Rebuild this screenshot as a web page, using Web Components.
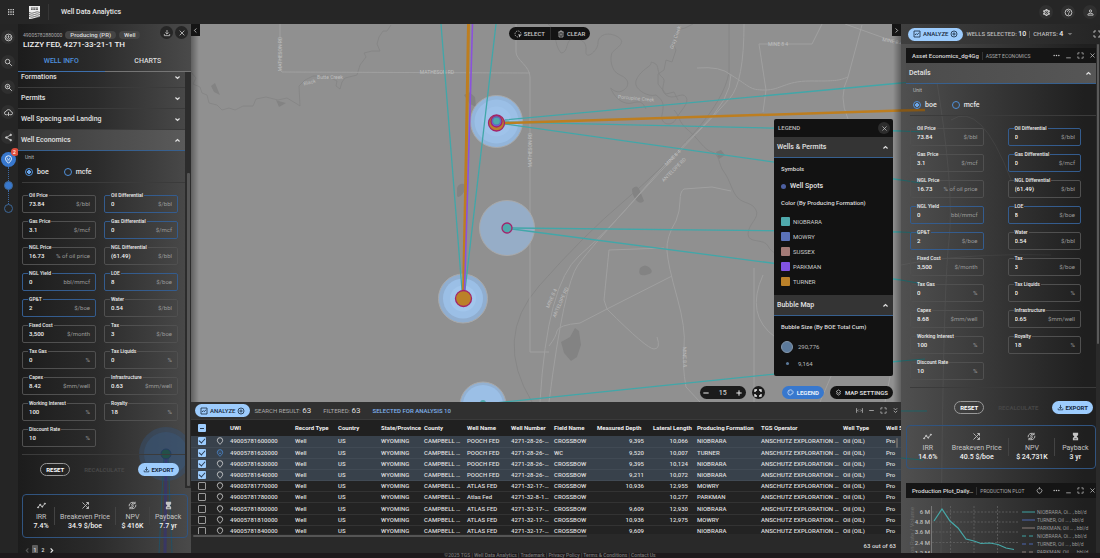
<!DOCTYPE html>
<html lang="en">
<head>
<meta charset="utf-8">
<title>Well Data Analytics</title>
<style>
  html, body {
    margin: 0;
    height: 100%;
    overflow: hidden;
    background: #262626;
    color: #e6e6e6;
    font: 500 6px/8px Roboto, "Liberation Sans", sans-serif;
  }
</style>
</head>
<body>
<app-shell>
  <app-header slot="header" title="Well Data Analytics"></app-header>
  <tool-rail slot="rail"></tool-rail>
  <well-panel slot="left"></well-panel>
  <map-view slot="map"></map-view>
  <results-grid slot="grid"></results-grid>
  <analysis-panel slot="right"></analysis-panel>
</app-shell>

<script>
const define = (tag, html, setup) => {
  customElements.define(tag, class extends HTMLElement {
    connectedCallback() {
      if (this.shadowRoot) return;
      const root = this.attachShadow({ mode: "open" });
      root.innerHTML = `<style>
        * { box-sizing: border-box; }
        button, input { font: inherit; color: inherit; margin: 0; }
        button { background: none; border: 0; padding: 0; cursor: pointer; }
      </style>` + (typeof html === "function" ? html(this) : html);
      if (setup) setup(this, root);
    }
  });
};

/* ---------- icons ---------- */
const ICONS = {
  apps: '<path fill="currentColor" stroke="none" d="M3 3h4v4H3zm7 0h4v4h-4zm7 0h4v4h-4zM3 10h4v4H3zm7 0h4v4h-4zm7 0h4v4h-4zM3 17h4v4H3zm7 0h4v4h-4zm7 0h4v4h-4z"/>',
  gear: '<path fill="currentColor" stroke="none" fill-rule="evenodd" d="M19.14 12.94c.04-.3.06-.61.06-.94 0-.32-.02-.64-.07-.94l2.03-1.58c.18-.14.23-.41.12-.61l-1.92-3.32c-.12-.22-.37-.29-.59-.22l-2.39.96c-.5-.38-1.03-.7-1.62-.94l-.36-2.54c-.04-.24-.24-.41-.48-.41h-3.84c-.24 0-.43.17-.47.41l-.36 2.54c-.59.24-1.13.57-1.62.94l-2.39-.96c-.22-.08-.47 0-.59.22L2.74 8.87c-.12.21-.08.47.12.61l2.03 1.58c-.05.3-.09.63-.09.94s.02.64.07.94l-2.03 1.58c-.18.14-.23.41-.12.61l1.92 3.32c.12.22.37.29.59.22l2.39-.96c.5.38 1.03.7 1.62.94l.36 2.54c.05.24.24.41.48.41h3.84c.24 0 .44-.17.47-.41l.36-2.54c.59-.24 1.13-.56 1.62-.94l2.39.96c.22.08.47 0 .59-.22l1.92-3.32c.12-.22.07-.47-.12-.61l-2.01-1.58zM12 17a5 5 0 1 1 0-10 5 5 0 0 1 0 10z"/><circle cx="12" cy="12" r="2.500" stroke-width="2"/>',
  help: '<circle cx="12" cy="12" r="9"/><path d="M9 10a3 3 0 1 1 4.500 2.500Q12 13.400 12 15M12 16.500v2"/>',
  person: '<circle cx="12" cy="8" r="3"/><path d="M5 19v-1.500q0-3.500 7-3.500t7 3.500V19z"/>',
  compass: '<circle cx="12" cy="12" r="9"/><path d="M12 6v7M8 8.500a5 5 0 1 0 8 0"/>',
  search: '<circle cx="9.500" cy="9.500" r="6"/><path d="M14 14l7 7"/>',
  searchplus: '<circle cx="9.500" cy="9.500" r="6"/><path d="M14 14l7 7M7 9.500h5M9.500 7v5"/>',
  cloud: '<path d="M8 18H6a4.500 4.500 0 0 1-.500-9A7 7 0 0 1 19 10a4 4 0 0 1-.500 8H16M12 11v9M9 17l3 3 3-3"/>',
  share: '<path d="M18 5L6 12l12 7"/><g fill="currentColor"><circle cx="18" cy="5" r="2"/><circle cx="6" cy="12" r="2"/><circle cx="18" cy="19" r="2"/></g>',
  pin: '<path d="M12 22C7 17 4 13.500 4 10a8 8 0 0 1 16 0c0 3.500-3 7-8 12z"/>',
  pinface: '<path d="M12 22C7 17 4 13.500 4 10a8 8 0 0 1 16 0c0 3.500-3 7-8 12z"/><path d="M8 9h2M14 9h2M9 13h6"/>',
  close: '<path d="M5 5l14 14M19 5L5 19"/>',
  down: '<path d="M5 8.500l7 7 7-7"/>',
  up: '<path d="M5 15.500l7-7 7 7"/>',
  left: '<path d="M15 5l-7 7 7 7"/>',
  right: '<path d="M9 5l7 7-7 7"/>',
  caret: '<path fill="#777" stroke="none" d="M5 9h14l-7 7z"/>',
  download: '<path d="M12 3v12M7 10.500l5 5 5-5M4 15v5h16v-5"/>',
  chart: '<path d="M3 3h18v18H3zM6 15l4-4 3 3 5-6"/>',
  addcircle: '<circle cx="12" cy="12" r="9"/><path d="M12 7v10M7 12h10"/>',
  lasso: '<circle cx="12" cy="12" r="9" stroke-dasharray="4 3"/><path fill="currentColor" stroke="none" d="M13 12l9 4-4 1.500L16 22z"/>',
  trash: '<path d="M4 6h16M9 6V3h6v3M6 6v15h12V6M10 10v7M14 10v7" stroke-width="2"/>',
  minus: '<path d="M4 12h16"/>',
  plus: '<path d="M4 12h16M12 4v16"/>',
  low: '<path d="M4 20h16"/>',
  dots: '<g fill="currentColor" stroke="none"><circle cx="4" cy="12" r="2.500"/><circle cx="12" cy="12" r="2.500"/><circle cx="20" cy="12" r="2.500"/></g>',
  full: '<path d="M3 9V3h6M15 3h6v6M21 15v6h-6M9 21H3v-6"/>',
  fitmap: '<g stroke-width="4"><path d="M3 9V3h6M15 3h6v6M21 15v6h-6M9 21H3v-6"/></g>',
  palette: '<path d="M12 3a9 9 0 1 0 0 18c2 0 1-3 2-4s7 1 7-5-5-9-9-9z"/><path d="M7 12h1M9 8h1M14 8h1M17 11h1"/>',
  layers: '<path d="M12 3l8 6-8 6-8-6zM4 15l8 6 8-6"/>',
  fit: '<path d="M2 4v16M22 4v16M9 9l-3 3 3 3M15 9l3 3-3 3"/>',
  dbl: '<path d="M6 4l6 6 6-6M6 13l6 6 6-6"/>',
  trend: '<path d="M2 18l6-8 6 5 8-9"/><g fill="currentColor"><circle cx="3" cy="17" r="1.500"/><circle cx="8.500" cy="10" r="1.500"/><circle cx="14" cy="15" r="1.500"/><circle cx="21" cy="7" r="1.500"/></g>',
  shuffle: '<path d="M4 4l6 6M4 20L20 4M14 4h6v6M14 14l6 6M20 14v6h-6"/>',
  money: '<path d="M3 14a9.500 9.500 0 0 1 16-8M21 10a9.500 9.500 0 0 1-16 8M19 2v5h-5M5 22v-5h5"/><path d="M15 9q-3-2.500-5 0t2 3 2 3-5 0M12 6v2M12 16v2"/>',
  hourglass: '<path fill="currentColor" stroke="none" d="M5 2h14v6l-4 4 4 4v6H5v-6l4-4-4-4z"/><path stroke="#333" stroke-width="2" d="M9 18h6"/>',
  refresh: '<path d="M8 6a8 8 0 1 0 8 0M12 2v6M9 5l3-3 3 3"/>'
};
define("ui-icon", el => `
  <style>
    :host { display: inline-flex; flex: none; width: var(--icon, 8px); height: var(--icon, 8px); }
    svg { width: 100%; height: 100%; fill: none; stroke: currentColor; stroke-width: var(--stroke, 2.4); }
  </style>
  <svg viewBox="0 0 24 24" aria-hidden="true">${ICONS[el.getAttribute("name")] || ""}</svg>`);

/* round icon-only button */
define("icon-button", el => `
  <style>
    :host { display: inline-flex; flex: none; }
    button { display: grid; place-items: center; width: var(--size, 14px); height: var(--size, 14px);
      border-radius: 50%; background: var(--bg, transparent); color: var(--fg, #ccc); }
  </style>
  <button type="button" aria-label="${el.getAttribute("label") || ""}"><ui-icon name="${el.getAttribute("icon")}"></ui-icon></button>`);

/* pill button: text in the slot, icons on either side */
define("pill-button", el => `
  <style>
    :host { display: inline-flex; flex: none; }
    button { display: flex; align-items: center; justify-content: center; gap: 3px; height: 13px; padding: 0 4px;
      border-radius: 7px; border: 1px solid transparent; background: #131313; color: #d5d5d5; font-weight: 700; --icon: 7px; white-space: nowrap; }
    :host([kind="light"]) button { background: #9dccfd; color: #16283c; gap: 1px; }
    :host([kind="blue"]) button { background: #3878ce; color: #e8f1fc; }
    :host([kind="line"]) button { background: none; border-color: #999; color: #fff; padding: 0 5px; }
    :host([kind="off"]) button { background: none; color: #464646; padding: 0; }
    :host([kind="light"][wide]) button { font-weight: 500; gap: 2px; --icon: 8px; }
  </style>
  <button type="button" ${el.hasAttribute("disabled") ? "disabled" : ""}>
    ${el.getAttribute("icon") ? `<ui-icon name="${el.getAttribute("icon")}"></ui-icon>` : ""}
    <slot></slot>
    ${el.getAttribute("end") ? `<ui-icon name="${el.getAttribute("end")}"></ui-icon>` : ""}
  </button>`);

/* ---------- frame ---------- */
define("app-shell", `
  <style>
    :host { display: grid; height: 100vh; grid-template: 24px minmax(0, 1fr) 5px / 18px 173px minmax(0, 1fr) 199px; }
    header { grid-column: 1 / -1; }
    .center { display: flex; flex-direction: column; min-width: 0; min-height: 0; }
    ::slotted([slot="map"]) { flex: 1; min-height: 0; }
    footer { grid-column: 1 / -1; overflow: hidden; background: #1d191b; color: #777; font-size: 5px; line-height: 5px; text-align: center; }
    footer a { color: inherit; text-decoration: none; }
  </style>
  <header><slot name="header"></slot></header>
  <slot name="rail"></slot>
  <slot name="left"></slot>
  <div class="center"><slot name="map"></slot><slot name="grid"></slot></div>
  <slot name="right"></slot>
  <footer>©2025 TGS | Well Data Analytics | <a href="#">Trademark</a> | <a href="#">Privacy Policy</a> | <a href="#">Terms &amp; Conditions</a> | <a href="#">Contact Us</a></footer>`);

define("app-header", el => `
  <style>
    :host { display: flex; align-items: center; height: 24px; padding: 0 3px 1px 4px; background: #262626; border-bottom: 1px solid #353535; }
    .logo { width: 11px; height: 13px; margin: 0 8px 0 11px; }
    h1 { margin: 0; padding-left: 12px; border-left: 1px solid #363636; font: 500 7px/16px Roboto, sans-serif; flex: 1; }
    nav { display: flex; gap: 8px; --bg: #303030; --icon: 9px; }
  </style>
  <icon-button icon="apps" label="Applications"></icon-button>
  <svg class="logo" viewBox="0 0 22 26"><path fill="#eee" d="M0 0h22v22q-6 0-11 2T0 26z"/><path stroke="#262626" stroke-width="1.200" fill="none" d="M0 13q6 3 11 0t11 0M0 17q6 3 11 0t11 0M0 21q6 3 11 0t11 0"/><path fill="#555" d="M4 3h14v5H4z"/><path stroke="#eee" stroke-width="1" d="M8 3v5M13 3v5M4 5.500h14"/></svg>
  <h1>${el.getAttribute("title")}</h1>
  <nav>
    <icon-button icon="gear" label="Settings"></icon-button>
    <icon-button icon="help" label="Help"></icon-button>
    <icon-button icon="person" label="Account"></icon-button>
  </nav>`);

define("tool-rail", `
  <style>
    :host { display: flex; flex-direction: column; align-items: center; gap: 11px; padding: 6px 2px 0 0; background: #252525; --bg: #2f2f2f; --icon: 9px; }
    .pins { display: flex; flex-direction: column; align-items: center; margin-top: -3px; position: relative; --bg: #3878ce; --fg: #fff; --size: 15px; --icon: 9px; }
    .badge { position: absolute; top: -4px; right: -3px; width: 8px; height: 8px; border-radius: 4px; background: #e04f3d; color: #fff; font-size: 5px; line-height: 8px; text-align: center; }
    i { height: 14px; border-left: 1px dotted #3c6aa5; }
    b { width: 9px; height: 9px; border-radius: 5px; border: 1px solid #3d6899; }
    b.on { background: #3878ce; }
  </style>
  <icon-button icon="compass" label="Explore"></icon-button>
  <icon-button icon="search" label="Search"></icon-button>
  <icon-button icon="searchplus" label="Advanced search"></icon-button>
  <icon-button icon="cloud" label="Downloads"></icon-button>
  <icon-button icon="share" label="Share"></icon-button>
  <div class="pins">
    <icon-button icon="pinface" label="Selected wells"></icon-button>
    <span class="badge">2</span>
    <i></i><b class="on"></b><i></i><b></b>
  </div>`);

/* ---------- shared economics form ---------- */
define("unit-field", el => `
  <style>
    :host { display: block; min-width: 0; }
    fieldset { display: flex; align-items: center; height: 21px; margin: 0; padding: 0 5px 2px 6px; min-width: 0; border: 1px solid #505050; border-radius: 2px; }
    :host([edited]) fieldset { border-color: #345c8e; }
    legend { padding: 0 1px; margin-left: -1px; font-size: 5px; line-height: 6px; height: 6px; color: #eee; white-space: nowrap; }
    input { flex: 1; width: 0; min-width: 0; height: 8px; padding: 0; border: 0; background: none; outline: 0; font-size: 6px; line-height: 8px; color: #f2f2f2; }
    span { color: #9a9a9a; font-size: 6px; font-weight: 400; white-space: nowrap; }
  </style>
  <fieldset>
    <legend><label for="v">${el.getAttribute("label")}</label></legend>
    <input id="v" value="${el.getAttribute("value")}"><span>${el.getAttribute("unit")}</span>
  </fieldset>`);

define("economics-form", el => {
  const fields = [
    ["Oil Price", "73.84", "$/bbl"], ["Oil Differential", "0", "$/bbl", 1],
    ["Gas Price", "3.1", "$/mcf"], ["Gas Differential", "0", "$/mcf", 1],
    ["NGL Price", "16.73", "% of oil price"], ["NGL Differential", "(61.49)", "$/bbl"],
    ["NGL Yield", "0", "bbl/mmcf", 1], ["LOE", "8", "$/boe", 1],
    ["GP&amp;T", "2", "$/boe", 1], ["Water", "0.54", "$/bbl"],
    ["Fixed Cost", "3,500", "$/month"], ["Tax", "3", "$/boe"],
    ["Tax Gas", "0", "%"], ["Tax Liquids", "0", "%"],
    ["Capex", el.getAttribute("capex"), "$mm/well"], ["Infrastructure", el.getAttribute("infrastructure"), "$mm/well"],
    ["Working Interest", "100", "%"], ["Royalty", "18", "%"],
    ["Discount Rate", "10", "%"]
  ];
  return `
  <style>
    :host { display: block; padding: 2px 0 0 4px; }
    .unit { padding-left: 3px; font-size: 5px; font-weight: 400; color: #bbb; }
    .radios { display: flex; gap: 15px; height: 14px; margin: 4px 0 3px 3px; font-size: 7px; }
    .radios label { display: flex; align-items: center; gap: 4px; }
    .radios input { appearance: none; width: 8px; height: 8px; border: 1px solid #4f8fd8; border-radius: 50%; }
    .radios input:checked { background: radial-gradient(#6aa6ea 0 2px, transparent 2px 4px); }
    .fields { display: grid; grid-template-columns: 1fr 1fr; gap: 5px var(--col-gap, 8px); padding: 9px var(--inset, 7px) 7px 0; border: solid #3b3b3b; border-width: 1px 0; }
    .actions { display: flex; justify-content: flex-end; align-items: center; gap: 13px; padding: var(--act-pad, 8px) var(--act-inset, 6px) 0 0; }
  </style>
  <div class="unit">Unit</div>
  <div class="radios">
    <label><input type="radio" name="unit" checked>boe</label>
    <label><input type="radio" name="unit">mcfe</label>
  </div>
  <div class="fields">${fields.map(([label, value, unit, edited]) =>
    `<unit-field label="${label}" value="${value}" unit="${unit}" ${edited ? "edited" : ""}></unit-field>`).join("")}</div>
  <div class="actions">
    <pill-button kind="line">RESET</pill-button>
    <pill-button kind="off" disabled>RECALCULATE</pill-button>
    <pill-button kind="light" icon="download">EXPORT</pill-button>
  </div>`;
});

define("metric-card", el => {
  const items = [["trend", "IRR", "irr"], ["shuffle", "Breakeven Price", "breakeven"], ["money", "NPV", "npv"], ["hourglass", "Payback", "payback"]];
  return `
  <style>
    :host { display: flex; justify-content: space-around; align-items: center; height: 44px; padding: 0 3px 0 8px; border: 1px solid #31547f; border-radius: 4px; box-sizing: border-box; }
    div { display: flex; flex-direction: column; align-items: center; font-size: 7px; line-height: 9px; color: #c4c4c4; font-weight: 400; --icon: 9px; white-space: nowrap; }
    b { font-weight: 500; color: #f2f2f2; }
    i { height: 18px; border-left: 1px solid #434343; }
    ui-icon { margin-bottom: 3px; }
  </style>
  ${items.map(([icon, label, key]) => `<div><ui-icon name="${icon}"></ui-icon><span>${label}</span><b>${el.getAttribute(key)}</b></div>`).join("<i></i>")}`;
});

/* collapsible section heading */
define("section-bar", el => `
  <style>
    :host { display: block; border-bottom: 1px solid #3b3b3b; }
    :host([open]) { background: var(--open-bg, linear-gradient(90deg, #3a3a3a, #5a5a5a)); border-color: #37608f; }
    button { display: flex; align-items: center; justify-content: space-between; width: 100%; height: 20px; padding: 0 4px 0 3px; font-size: 7px; line-height: 9px; text-align: left; color: #e2e2e2; --icon: 7px; --stroke: 4; }
  </style>
  <button type="button" aria-expanded="${el.hasAttribute("open")}"><slot></slot><ui-icon name="${el.hasAttribute("open") ? "up" : "down"}"></ui-icon></button>`);

/* ---------- left panel ---------- */
define("well-panel", `
  <style>
    :host { display: flex; flex-direction: column; position: relative; overflow: hidden; background: linear-gradient(90deg, #1c1c1c, #2b2b2b 45%, #4a4a4a); }
    .ghost { position: absolute; right: 0; bottom: 0; width: 60px; height: 130px; }
    .top { position: relative; padding: 7px 4px 0 5px; }
    .meta { display: flex; align-items: center; gap: 3px; font-size: 5px; color: #aaa; font-weight: 400; }
    .meta b { padding: 0 5px; border-radius: 4px; background: #454545; color: #ddd; font-size: 6px; font-weight: 500; line-height: 8px; }
    h2 { margin: 1px 0 0; font: 500 8px/10px Roboto, sans-serif; color: #f0f0f0; }
    .tools { position: absolute; top: 2px; right: 3px; display: flex; gap: 2px; --size: 13px; --bg: #262626; --icon: 8px; }
    .tabs { display: flex; position: relative; }
    .tabs button { flex: 1; height: 22px; font-size: 7px; border-bottom: 1px solid #757575; color: #ddd; }
    .tabs button.on { color: #4f90de; border-color: #3d6fac; }
    .scroll { position: relative; display: flex; flex: 1; min-height: 0; }
    .list { flex: 1; min-width: 0; }
    .first { margin-top: -5px; }
    .clip { overflow: hidden; }
    .bar { width: 6px; padding: 101px 1px 0 2px; background: #2c2c2c; height: 416px; }
    .bar i { display: block; height: 313px; background: #555; border-radius: 1px; }
    metric-card { margin: 18px -3px 0 4px; }
    .pages { display: flex; align-items: center; gap: 2px; padding: 7px 6px 0; font-size: 5px; --icon: 7px; --stroke: 4; }
    .pages button { width: 6px; height: 10px; border-radius: 1px; display: grid; place-items: center; }
    .pages .on { background: #5e5e5e; }
    .pages .off { color: #555; }
  </style>
  <svg class="ghost" viewBox="131 423 60 130">
    <circle cx="166" cy="454" r="27" fill="#35506f" opacity=".5"/>
    <circle cx="166" cy="454" r="22" fill="#3a5a80" opacity=".4"/>
    <path d="M164 455l-5 98M168 455l4 98" stroke="#234f63" fill="none"/>
    <path d="M166 455l-1 98" stroke="#34307a" stroke-width="3" opacity=".6"/>
    <circle cx="166" cy="454" r="5" fill="#23504a" stroke="#273b63"/>
  </svg>
  <div class="top">
    <div class="meta">49005782880000 <b>Producing (PR)</b> <b>Well</b></div>
    <h2>LIZZY FED, 4271-33-21-1 TH</h2>
    <div class="tools"><icon-button icon="download" label="Download"></icon-button><icon-button icon="close" label="Close"></icon-button></div>
  </div>
  <div class="tabs"><button type="button" class="on">WELL INFO</button><button type="button">CHARTS</button></div>
  <div class="scroll">
    <div class="list">
      <div class="clip"><section-bar class="first">Formations</section-bar></div>
      <section-bar>Permits</section-bar>
      <section-bar>Well Spacing and Landing</section-bar>
      <section-bar open>Well Economics</section-bar>
      <economics-form capex="8.42" infrastructure="0.63"></economics-form>
      <metric-card irr="7.4%" breakeven="34.9 $/boe" npv="$ 416K" payback="7.7 yr"></metric-card>
      <div class="pages"><button type="button" class="off" aria-label="Previous"><ui-icon name="left"></ui-icon></button><button type="button" class="on">1</button><button type="button">2</button><button type="button" aria-label="Next"><ui-icon name="right"></ui-icon></button></div>
    </div>
    <div class="bar"><i></i></div>
  </div>`);

/* ---------- map ---------- */
define("map-legend", `
  <style>
    :host { display: block; width: 119px; background: #121212; border-radius: 2px; overflow: hidden; --open-bg: #343434; }
    .head { display: flex; align-items: center; justify-content: space-between; height: 18px; padding: 0 3px 0 4px; font-size: 6px; color: #bbb; --size: 12px; --bg: #2d2d2d; --icon: 7px; }
    section { padding: 5px 7px 9px; }
    h4 { margin: 0 0 5px; font: 500 6px/12px Roboto, sans-serif; color: #ddd; }
    .spot { display: flex; align-items: center; gap: 4px; height: 12px; margin-bottom: 5px; font-size: 7px; }
    .spot i { width: 5px; height: 5px; border-radius: 50%; background: #4c5fa0; }
    ul { display: grid; gap: 6px; margin: 8px 0 0; padding: 0; list-style: none; font-size: 6px; line-height: 9px; font-weight: 400; color: #ccc; }
    li { display: flex; align-items: center; gap: 3px; }
    li i { width: 9px; height: 9px; border-radius: 1px; background: var(--c); }
    .size { display: flex; align-items: center; gap: 5px; height: 17px; font-weight: 400; color: #bbb; }
    .size span { display: grid; place-items: center; width: 12px; }
    .size i { width: 3px; height: 3px; border-radius: 50%; background: #5c7a9b; }
    .size .big { width: 12px; height: 12px; border: 1px solid #8497ab; }
    .last { padding: 5px 7px 4px; }
  </style>
  <div class="head">LEGEND <icon-button icon="close" label="Close legend"></icon-button></div>
  <section-bar open>Wells &amp; Permits</section-bar>
  <section>
    <h4>Symbols</h4>
    <div class="spot"><i></i>Well Spots</div>
    <h4>Color (By Producing Formation)</h4>
    <ul>
      <li style="--c:#4fa9ac"><i></i>NIOBRARA</li>
      <li style="--c:#5b72b8"><i></i>MOWRY</li>
      <li style="--c:#a37a76"><i></i>SUSSEX</li>
      <li style="--c:#8153e2"><i></i>PARKMAN</li>
      <li style="--c:#bb8129"><i></i>TURNER</li>
    </ul>
  </section>
  <section-bar open>Bubble Map</section-bar>
  <section class="last">
    <h4>Bubble Size (By BOE Total Cum)</h4>
    <div class="size"><span><i class="big"></i></span>290,776</div>
    <div class="size"><span><i></i></span>9,164</div>
  </section>`);

define("map-view", `
  <style>
    :host { display: block; position: relative; background: #909090; overflow: hidden; }
    .canvas { position: absolute; inset: 0; width: 100%; height: 100%; }
    .canvas text { font: 400 5px Roboto, sans-serif; fill: #bebebe; text-anchor: middle; }
    .shade { position: absolute; inset: 0; background: linear-gradient(90deg, #0005, transparent 8px, transparent calc(100% - 8px), #0005); }
    .over { position: absolute; inset: 0; display: flex; flex-direction: column; padding: 3px 8px; }
    .row { display: flex; align-items: center; gap: 6px; }
    .select { align-self: center; border-radius: 7px; background: #131313; --icon: 8px; display: flex; margin-left: 7px; color: #ccc; }
    .select button { display: flex; align-items: center; gap: 2px; height: 13px; padding: 0 5px; font-size: 6px; }
    .select button + button { border-left: 1px solid #2d2d2d; padding-left: 6px; }
    map-legend { margin: auto 0 10px auto; }
    .bottom { justify-content: flex-end; --size: 13px; --bg: #1b1b1b; --fg: #eee; }
    .zoom { display: flex; align-items: center; height: 13px; border-radius: 7px; background: #1b1b1b; color: #ccc; font-size: 7px; --bg: none; --stroke: 3; }
    .zoom span { width: 20px; text-align: center; }
    .gap { width: 5px; }
    .edge { position: absolute; top: 0; width: 9px; height: 12px; background: #141414; --icon: 7px; display: grid; place-items: center; }
    .l { left: 0; } .r { right: 0; }
  </style>
  <svg class="canvas" viewBox="191 24 710 378" preserveAspectRatio="xMinYMin slice">
    <g fill="none" stroke="#848484" stroke-width=".8" stroke-linejoin="round">
      <path d="M191 72l5 6-3 6 7 3 2 6 5 2 2 8 8 2 5 5 7-2 6 2 8-4 10 0 3-7 10-2 12 3 9-2 10 6 3 2-1-20 6-6 8-4 14 0 10 5-1 5 4 3 2-7 3-4 12-3 3-10 6-8-2-4 8-2 8 0-3-7 2-7 4-6 4 0 4-6"/>
      <path d="M548 24c10 6 5 20 13 29 8 0 4-14 12-14s14 2 13 12 12 0 12-8 10-12 20-6-4 12-6 16-2 18 8 22 10 12 2 16-14-8-10 0 12 14 20 12 10-2 14 6M656 95c-8 2-18-4-20-10s6-14 12-18 0-6 6-4 2 10 8 14-4 12 4 18 16-4 20 2-6 14-10 22-16 6-14-4 2-14-6-20"/>
      <path d="M674 110c6 6 4 12 14 20s16 20 24 22 6 12 12 20 8 20 14 26 14 4 18 12-8 14-8 24 16 4 20 12 12 8 14 14"/>
      <path d="M729 24v48q-4 26-36 62t-70 68-84 84-7 116"/>
      <path d="M693 24l-8 4-8 2-4 14 3 6-4 12-6-2-2 10-6 4 0 10 8 10 8-2 4 8"/>
    </g>
    <g fill="#838383">
      <path d="M211 86l4-3 5 12-6-3zM276 100l6 2 4 1-7 4zM464 95l5-3 6 5 1 10-6-3zM457 188q2-5 7-4t0 8-7 4zM632 189q5-6 8 2l4 10q-4 4-8-1t-4-11zM716 152l5-2 4 5-6 4zM640 268q5-5 10 0t-4 7-6-7zM561 342l9-5 5-9 4 3 2 14-4 12-6 4-7-8z"/>
    </g>
    <g fill="none" stroke="#a0a0a0" stroke-linejoin="round">
      <path d="M280 24v46l2 2 248 1M516 24v28c0 8 14 14 14 25v275h19"/>
      <path d="M744 24q0 58-14 74t-30 32-62 66-60 69-29 137M731 74q0 26-30 54t-60 64-62 64-39 146"/>
      <path d="M697 68q24-2 34 7c20 12 18 15 34 15s20-9 45-9 28 0 38-4l14-52M822 24l-10 20h-53l7 46-3 22M845 24l56 20M848 77q-10 20 0 42"/>
      <path d="M731 191l-19-4-28 2q-4 2-4 12t-4 20q-10 16-9 30t10 46 7 50 2 40l14 15M609 250l55-2M609 250l-5 50 3 9 65-33M607 309l-27 14q-22 2-23 8t-8 15M607 309q40 40 47 40t3-12M754 268v134M763 275q-18 40 12 62"/>
      <path d="M820 402l12-28M885 402l8-40"/>
    </g>
    <g>
      <text transform="translate(282 54) rotate(-90)">MATHESON RD</text>
      <text x="437" y="74">MATHESON RD</text>
      <text transform="translate(532 150) rotate(-90)">MATHESON RD</text>
      <text transform="translate(310 84) rotate(-15)">Black</text>
      <text x="330" y="79">Butte Creek</text>
      <text transform="translate(636 100) rotate(5)">Porcupine Creek</text>
      <text transform="translate(677 38) rotate(-70)">Gray Creek</text>
      <text x="778" y="46">MINE 8 4</text>
      <text transform="translate(892 43) rotate(12)">MINE 8 4</text>
      <text transform="translate(674 159) rotate(-45)">MINE 8 4</text>
      <text transform="translate(675 171) rotate(-45)">ANTELOPE RD</text>
      <text transform="translate(553 299) rotate(-66)">MINE 8 4</text>
      <text transform="translate(562 303) rotate(-66)">ANTELOPE RD</text>
      <text transform="translate(683 357) rotate(88)">MINE 8 4</text>
    </g>
    <!-- bubbles -->
    <g stroke="#a9a9a9">
      <circle cx="496.500" cy="121.500" r="26" fill="#93b5da"/>
      <circle cx="507" cy="228" r="27.500" fill="#96adc7"/>
      <circle cx="463" cy="298.500" r="24.500" fill="#90aed0"/>
      <circle cx="483" cy="405" r="23" fill="#93b1d2"/>
    </g>
    <g fill="#9bbfe6">
      <circle cx="496.500" cy="121.500" r="22"/><circle cx="463" cy="298.500" r="20"/><circle cx="483" cy="405" r="20"/>
      <circle cx="463" cy="298.500" r="13" fill="#a2c6ec"/><circle cx="496.500" cy="121.500" r="15" fill="#9fc3ea"/>
    </g>
    <!-- laterals -->
    <g fill="none" stroke="#41a7a9" stroke-width="1.300">
      <path d="M441 24l21 266M496 24l-31 266M505 120l396-37M505 122l396 9M505 124l396 56M512 228l389 4M512 229l389 51M495 403l406-42"/>
    </g>
    <path d="M505 123l396-12.500" stroke="#bd7e20" stroke-width="2.500"/>
    <path d="M468.500 24l-3 170-2 98" fill="none" stroke="#bd7e20" stroke-width="3"/>
    <path d="M472.500 24l-5 170-3 98" fill="none" stroke="#8a52dc" stroke-width="1.600"/>
    <g stroke="#a2246c" stroke-width="1.300">
      <circle cx="496.500" cy="123" r="8" fill="#bb8129"/>
      <circle cx="496.500" cy="121.500" r="5.500" fill="#8153e2"/>
      <circle cx="496.500" cy="121" r="4" fill="#4fa9ac" stroke="#5b72b8"/>
      <circle cx="507" cy="228" r="5" fill="#4fa9ac"/>
      <circle cx="463.500" cy="298.500" r="8" fill="#bb8129"/>
      <circle cx="483" cy="403" r="3" fill="#4fa9ac" stroke="none"/>
    </g>
  </svg>
  <div class="shade"></div>
  <div class="over">
    <div class="select"><button type="button"><ui-icon name="lasso"></ui-icon>SELECT</button><button type="button"><ui-icon name="trash"></ui-icon>CLEAR</button></div>
    <map-legend></map-legend>
    <div class="row bottom">
      <div class="zoom"><icon-button icon="minus" label="Zoom out"></icon-button><span>15</span><icon-button icon="plus" label="Zoom in"></icon-button></div>
      <icon-button icon="fitmap" label="Fit map"></icon-button>
      <span class="gap"></span>
      <pill-button kind="blue" icon="palette">LEGEND</pill-button>
      <pill-button icon="layers">MAP SETTINGS</pill-button>
    </div>
  </div>
  <button type="button" class="edge l" aria-label="Collapse left"><ui-icon name="left"></ui-icon></button>
  <button type="button" class="edge r" aria-label="Collapse right"><ui-icon name="right"></ui-icon></button>`);

/* ---------- results table ---------- */
const COLUMNS = [["UWI", 65], ["Record Type", 43], ["Country", 43], ["State/Province", 43], ["County", 43], ["Well Name", 44], ["Well Number", 43],
  ["Field Name", 43], ["Measured Depth", 56], ["Lateral Length", 44], ["Producing Formation", 64], ["TGS Operator", 82], ["Well Type", 43], ["Well S", 0]];
const ROWS = [
  ["49005781600000", "POOCH FED", "4271-28-26-…", "CROSSBOW", "9,395", "10,066", "NIOBRARA"],
  ["49005781620000", "POOCH FED", "4271-28-26-…", "WC", "9,520", "10,007", "TURNER"],
  ["49005781630000", "POOCH FED", "4271-28-26-…", "CROSSBOW", "9,395", "10,124", "NIOBRARA"],
  ["49005781640000", "POOCH FED", "4271-28-26-…", "CROSSBOW", "9,211", "10,072", "NIOBRARA"],
  ["49005781770000", "ATLAS FED", "4271-32-17-…", "CROSSBOW", "10,936", "12,955", "MOWRY"],
  ["49005781780000", "Atlas Fed", "4271-32-8-1…", "CROSSBOW", "", "10,277", "PARKMAN"],
  ["49005781800000", "ATLAS FED", "4271-32-17-…", "CROSSBOW", "9,609", "12,930", "NIOBRARA"],
  ["49005781810000", "ATLAS FED", "4271-32-17-…", "CROSSBOW", "10,936", "12,975", "MOWRY"],
  ["49005781840000", "ATLAS FED", "4271-32-17-…", "CROSSBOW", "9,609", "", "NIOBRARA"]
];
define("results-grid", () => {
  const row = ([uwi, name, number, field, depth, lateral, formation], i) => `
    <tr class="${i < 4 ? "on" : ""}">
      <td class="c"><input type="checkbox" aria-label="Select ${uwi}" ${i < 4 ? "checked" : ""}></td>
      <td class="p ${i === 1 ? "blue" : ""}"><ui-icon name="${i === 1 ? "pinface" : "pin"}"></ui-icon></td>
      <td>${uwi}</td><td>Well</td><td>US</td><td>WYOMING</td><td>CAMPBELL …</td><td>${name}</td><td>${number}</td><td>${field}</td>
      <td class="n">${depth}</td><td class="n">${lateral}</td><td>${formation}</td><td>ANSCHUTZ EXPLORATION …</td><td>Oil (OIL)</td><td>Pro</td>
    </tr>`;
  return `
  <style>
    :host { display: block; position: relative; background: #292929; }
    .bar { display: flex; align-items: center; gap: 12px; height: 18px; padding: 0 0 0 4px; background: #303030; border-bottom: 1px solid #3a3a3a; color: #aaa; font-weight: 400; }
    .bar big { font-size: 8px; color: #ddd; }
    .bar .sel { color: #7fb2ec; font-weight: 500; }
    .bar pill-button { margin-right: -8px; }
    .tools { margin-left: auto; display: flex; --size: 12px; --icon: 7px; }
    .wrap { height: 114px; overflow: hidden; }
    table { width: 100%; height: 117px; table-layout: fixed; border-collapse: collapse; }
    th, td { padding: 0 0 0 4px; text-align: left; white-space: nowrap; line-height: 8px; }
    th { height: 16px; font-weight: 700; background: #202020; color: #eee; }
    td { height: 11px; border-bottom: 1px solid #333; color: #ddd; background: #232323; }
    .on td { background: #38414b; border-color: #414a54; }
    td.n { text-align: right; padding-right: 5px; }
    .c, .p { text-align: center; vertical-align: middle; padding: 0; --icon: 8px; }
    .p ui-icon { vertical-align: top; }
    .blue { color: #4a8ad6; }
    input { appearance: none; display: block; position: relative; width: 8px; height: 8px; margin: 0 auto; border: 1px solid #999; border-radius: 1px; }
    input:checked, input.some { border: 0; background: #9dccfd; }
    input:checked::after { content: ""; display: block; width: 3px; height: 5px; margin: 0 auto; border: solid #27394e; border-width: 0 1px 1px 0; transform: rotate(42deg); }
    input.some { background: linear-gradient(#27394e, #27394e) center / 4px 1px no-repeat, #9dccfd; }
    .v { position: absolute; top: 36px; right: 3px; width: 2px; height: 10px; background: #666; border-radius: 1px; }
    .h { width: 394px; height: 2px; margin: 1px 0 0 2px; background: #555; border-radius: 1px; }
    .foot { padding: 5px 5px 3px; text-align: right; color: #ddd; }
  </style>
  <div class="bar">
    <pill-button kind="light" wide icon="chart" end="addcircle">ANALYZE</pill-button>
    <span>SEARCH RESULT: <big>63</big></span>
    <span>FILTERED: <big>63</big></span>
    <span class="sel">SELECTED FOR ANALYSIS 10</span>
    <span class="tools"><icon-button icon="fit" label="Fit columns"></icon-button><icon-button icon="minus" label="Minimize"></icon-button><icon-button icon="full" label="Full screen"></icon-button><icon-button icon="dbl" label="Collapse"></icon-button></span>
  </div>
  <div class="wrap">
    <table>
      <colgroup><col style="width:22px"><col style="width:13px">${COLUMNS.map(([, w]) => `<col ${w ? `style="width:${w}px"` : ""}>`).join("")}</colgroup>
      <thead><tr><th class="c"><input class="some" type="checkbox" aria-label="Select all"></th><th></th>${COLUMNS.map(([t]) => `<th>${t}</th>`).join("")}</tr></thead>
      <tbody>${ROWS.map(row).join("")}</tbody>
    </table>
  </div>
  <span class="v"></span>
  <div class="h"></div>
  <div class="foot">63 out of 63</div>`;
});

/* ---------- right panel ---------- */
define("widget-bar", el => `
  <style>
    :host { display: flex; align-items: center; height: 15px; padding: 0 0 0 6px; background: #151515; color: #ddd; white-space: nowrap; }
    b { font-weight: 500; padding-right: 3px; border-right: 1px solid #333; font-size: 6px; }
    span { padding-left: 3px; color: #aaa; font-size: 5px; font-weight: 400; flex: 1; }
    nav { display: flex; margin-right: -2px; --size: 12px; --icon: 7px; }
    .re { margin-right: 5px; }
  </style>
  <b>${el.getAttribute("name")}</b><span>${el.getAttribute("kind")}</span>
  <nav>${el.hasAttribute("refresh") ? '<icon-button class="re" icon="refresh" label="Refresh"></icon-button>' : ""}<icon-button icon="dots" label="More"></icon-button><icon-button icon="low" label="Minimize"></icon-button><icon-button icon="full" label="Expand"></icon-button><icon-button icon="close" label="Close"></icon-button></nav>`);

define("production-plot", () => {
  const series = [["NIOBRARA, Oi… , bbl/d", "#3fa3a3", ""], ["TURNER, Oil … , bbl/d", "#4d66b0", ""], ["PARKMAN, Oil … , bbl/d", "#8c7f7a", ""],
    ["NIOBRARA, Oi… , bbl/d", "#3fa3a3", "4 3"], ["TURNER, Oil … , bbl/d", "#4d66b0", "4 3"], ["PARKMAN, Oil … , bbl/d", "#8c7f7a", "4 3"]];
  return `
  <style>
    :host { display: flex; overflow: hidden; padding-left: 2px; }
    .plot { flex: none; width: 112px; height: 60px; }
    .plot text { font: 500 6px Roboto, sans-serif; fill: #bbb; text-anchor: end; }
    .plot .axis { fill: #6c6c6c; font-weight: 400; }
    ul { margin: 10px 0 0 2px; padding: 0; list-style: none; font-size: 5px; font-weight: 400; color: #999; }
    li { display: flex; align-items: center; gap: 2px; white-space: nowrap; }
    li svg { width: 13px; height: 2px; }
  </style>
  <svg class="plot" viewBox="908 498 112 60">
    <path d="M931.500 506v52" stroke="#777"/>
    <path d="M932 512h87M932 522h87M932 532h87M932 542.500h87M950.500 506v52M974 506v52M997.500 506v52" stroke="#626262" stroke-width=".8" stroke-dasharray="2 1.500"/>
    <text x="930" y="514">6 M</text><text x="930" y="524">4.8 M</text><text x="930" y="534">3.6 M</text><text x="930" y="545">2.4 M</text><text x="930" y="555">1.2 M</text>
    <text class="axis" transform="translate(914 507) rotate(-90)">Production Rate / Volume</text>
    <path d="M934 521l8-12 8 12 8 7 8 11 8 2 7 2.500 9-.500 8 1.500 8 3.500 8 1.500" fill="none" stroke="#46a8a8" stroke-width="1.200"/>
  </svg>
  <ul>${series.map(([label, color, dash]) => `<li><svg viewBox="0 0 13 2"><path d="M0 1h13" stroke="${color}" stroke-dasharray="${dash}"/></svg>${label}</li>`).join("")}</ul>`;
});

define("analysis-panel", `
  <style>
    :host { display: flex; flex-direction: column; position: relative; overflow: hidden; background: linear-gradient(90deg, #505050, #3a3a3a 40%, #1f1f1f 92%);
      --col-gap: 24px; --inset: 15px; --act-pad: 13px; --act-inset: 3px; }
    .ghost { position: absolute; left: 0; top: 0; width: 199px; height: 529px; }
    .top { display: flex; align-items: center; height: 20px; padding: 0 0 0 7px; position: relative; color: #bbb; white-space: nowrap; background: linear-gradient(90deg, #3f3f3f, #252525); }
    .top big { font-size: 7px; color: #eee; }
    .top pill-button { margin-right: 3px; }
    .top .r { margin-left: auto; margin-right: -3px; --size: 13px; --icon: 8px; }
    .top i { height: 7px; margin: 0 3px; border-left: 1px solid #555; }
    .body { display: flex; flex: 1; min-height: 0; position: relative; padding: 4px 0 0 5px; }
    .list { flex: 1; min-width: 0; }
    metric-card { margin-top: 11px; }
    .plot { margin-top: 14px; }
    .bar { width: 4px; padding: 0 1px; background: #2a2a2a; margin-top: -4px; }
    .bar i { display: block; height: 300px; background: #5a5a5a; border-radius: 1px; }
  </style>
  <svg class="ghost" viewBox="901 24 199 529">
    <g stroke="#14686c" fill="none" opacity=".8"><path d="M901 83l22-2M901 131l22 1M901 180l20 3M901 232l20 1M901 280l22 4M901 361l24-2M901 411h26M901 458l22 2"/></g>
    <path d="M901 110.500l24-.500" stroke="#855716" stroke-width="2.500"/>
    <g stroke="#fff" opacity=".05" fill="none"><path d="M935 70q20 120 14 170t-8 313M901 265q60-12 150-10M951 120q30-20 60 60"/></g>
  </svg>
  <div class="top">
    <pill-button kind="light" wide icon="chart" end="addcircle">ANALYZE</pill-button>
    <span>WELLS SELECTED: <big>10</big></span><i></i><span>CHARTS: <big>4</big></span>
    <icon-button icon="caret" label="Charts menu"></icon-button>
    <icon-button class="r" icon="full" label="Full screen"></icon-button>
  </div>
  <div class="body">
    <div class="list">
      <widget-bar name="Asset Economics_dg4Gg" kind="ASSET ECONOMICS"></widget-bar>
      <section-bar open style="--open-bg: linear-gradient(90deg, #4c4c4c, #565656)">Details</section-bar>
      <economics-form capex="8.68" infrastructure="0.65"></economics-form>
      <metric-card irr="14.6%" breakeven="40.5 $/boe" npv="$ 24,731K" payback="3 yr"></metric-card>
      <widget-bar class="plot" name="Production Plot_Daily…" kind="PRODUCTION PLOT" refresh></widget-bar>
      <production-plot></production-plot>
    </div>
    <div class="bar"><i></i></div>
  </div>`);
</script>
</body>
</html>
